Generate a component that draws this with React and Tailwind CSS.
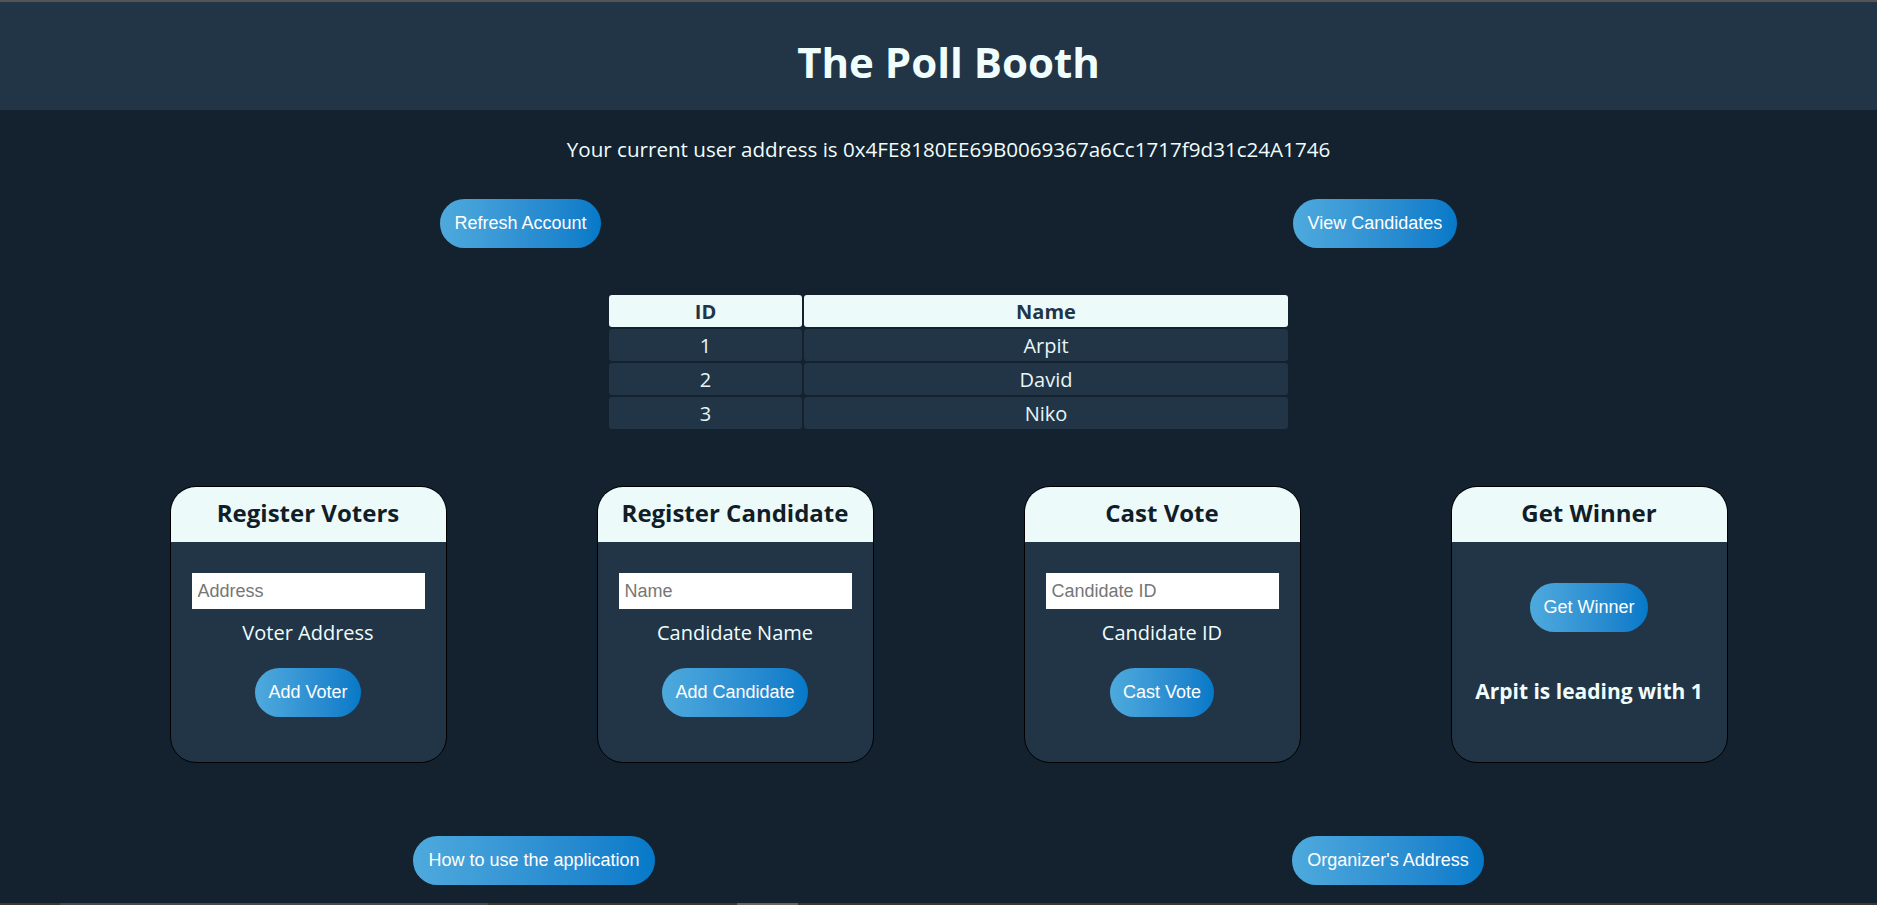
import React, { useState } from 'react';

const candidates = [
  { id: 1, name: 'Arpit' },
  { id: 2, name: 'David' },
  { id: 3, name: 'Niko' },
];

const btn =
  "h-[49px] px-[13px] rounded-[25px] bg-gradient-to-r from-[#4eaadd] to-[#0479c8] text-white text-[18px] font-['Liberation_Sans',Arial,sans-serif] whitespace-nowrap";

const Card = ({ title, children }) => (
  <div className="w-[277px] h-[277px] rounded-[26px] border border-black bg-[#213547] overflow-hidden flex flex-col">
    <div className="h-[55px] shrink-0 pb-[4px] bg-[#ecfafa] flex items-center justify-center text-[24px] font-bold text-[#111d27]">
      {title}
    </div>
    <div className="flex flex-col items-center">{children}</div>
  </div>
);

const FormCard = ({ title, placeholder, label, action }) => {
  const [value, setValue] = useState('');
  return (
    <Card title={title}>
      <input
        className="mt-[31px] w-[233px] h-[36px] bg-white px-[6px] text-[18px] text-black placeholder:text-[#767676] font-['Liberation_Sans',Arial,sans-serif] outline-none"
        placeholder={placeholder}
        value={value}
        onChange={e => setValue(e.target.value)}
      />
      <p className="mt-[10px] text-[20px] leading-[27px] text-[#f0fdfd]">{label}</p>
      <button className={`mt-[22px] ${btn}`}>{action}</button>
    </Card>
  );
};

export default function App() {
  return (
    <div className="h-[905px] overflow-hidden flex flex-col bg-[#13222e] font-['Open_Sans','Noto_Sans',sans-serif]">
      <div className="h-[2px] shrink-0 bg-[#555555]" />
      {/* Header */}
      <header className="h-[108px] shrink-0 bg-[#213547] flex items-center justify-center pl-[20px] pt-[12px]">
        <h1 className="text-[42px] font-bold text-[#f0fdfd] leading-none">The Poll Booth</h1>
      </header>

      <div className="pl-[20px] flex flex-col">
        <p className="mt-[26px] text-center text-[20.6px] leading-[27px] text-[#f0fdfd]">
          Your current user address is 0x4FE8180EE69B0069367a6Cc1717f9d31c24A1746
        </p>

        <div className="mt-[36px] flex">
          <button className={`ml-[420px] w-[161px] px-0 ${btn}`}>Refresh Account</button>
          <button className={`ml-[692px] w-[164px] px-0 ${btn}`}>View Candidates</button>
        </div>

        {/* Candidates table */}
        <div className="mt-[45px] flex justify-center">
          <table className="border-separate border-spacing-[2px] text-[20px]">
            <thead>
              <tr>
                <th className="w-[193px] h-[32px] p-0 pt-[2px] rounded-[3px] bg-[#ecfafa] text-[#213547] font-bold">ID</th>
                <th className="w-[484px] h-[32px] p-0 pt-[2px] rounded-[3px] bg-[#ecfafa] text-[#213547] font-bold">Name</th>
              </tr>
            </thead>
            <tbody>
              {candidates.map(c => (
                <tr key={c.id}>
                  <td className="h-[32px] p-0 pt-[2px] rounded-[3px] bg-[#213547] text-[#e8f6f6] text-center">{c.id}</td>
                  <td className="h-[32px] p-0 pt-[2px] rounded-[3px] bg-[#213547] text-[#e8f6f6] text-center">{c.name}</td>
                </tr>
              ))}
            </tbody>
          </table>
        </div>

        {/* Action cards */}
        <div className="mt-[55px] flex justify-center gap-[150px]">
          <FormCard title="Register Voters" placeholder="Address" label="Voter Address" action="Add Voter" />
          <FormCard title="Register Candidate" placeholder="Name" label="Candidate Name" action="Add Candidate" />
          <FormCard title="Cast Vote" placeholder="Candidate ID" label="Candidate ID" action="Cast Vote" />
          <Card title="Get Winner">
            <button className={`mt-[41px] ${btn}`}>Get Winner</button>
            <p className="mt-[46px] text-[21px] leading-[27px] font-bold text-[#f0fdfd]">Arpit is leading with 1</p>
          </Card>
        </div>

        <div className="mt-[73px] flex">
          <button className={`ml-[393px] w-[242px] px-0 ${btn}`}>How to use the application</button>
          <button className={`ml-[637px] w-[192px] px-0 ${btn}`}>Organizer's Address</button>
        </div>
      </div>

      {/* bottom strip */}
      <div className="mt-auto h-[2px] shrink-0 bg-[#3d3829] flex">
        <div className="ml-[60px] w-[428px] bg-[#4a4a4a]" />
        <div className="ml-[249px] w-[61px] bg-[#6a6459]" />
      </div>
    </div>
  );
}
